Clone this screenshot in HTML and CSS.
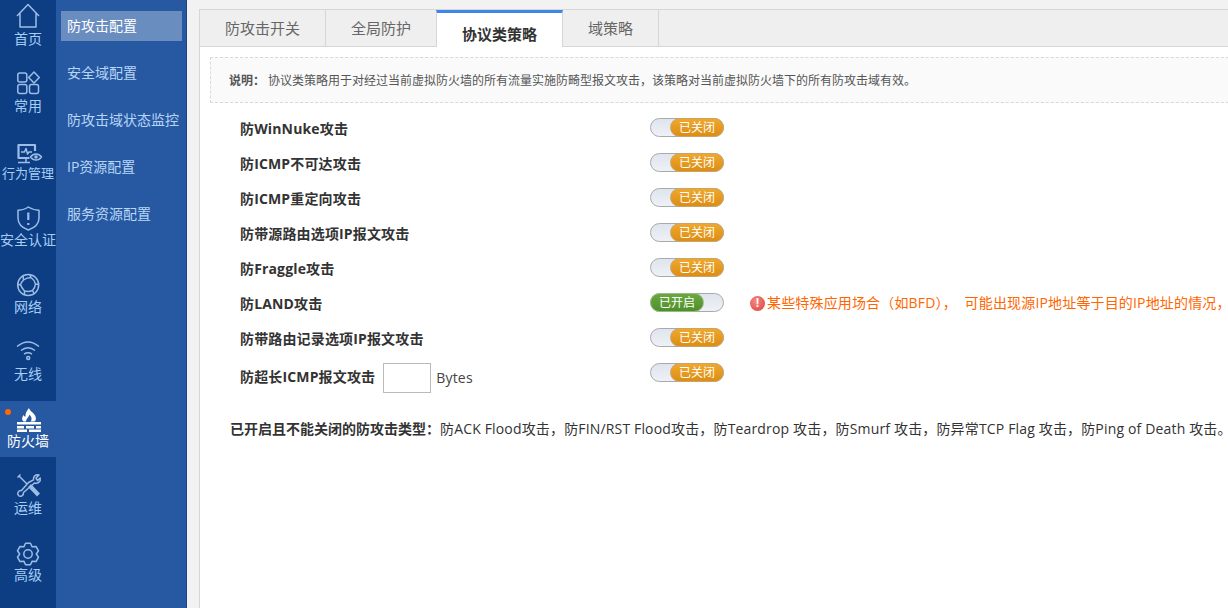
FILE: index.html
```html
<!DOCTYPE html>
<html lang="zh-CN">
<head>
<meta charset="utf-8">
<title>防攻击配置</title>
<link rel="stylesheet" href="styles.css">
</head>
<body>
<div class="app">
  <nav class="rail">
    <a class="rail-item">
      <svg class="rail-icon" viewBox="0 0 28 28"><path d="M3 14 14 2.500 25 14M6 11.500V25H22V11.500"/></svg>
      <span>首页</span>
    </a>
    <a class="rail-item">
      <svg class="rail-icon" viewBox="0 0 28 28"><rect x="3.800" y="4" width="9" height="9" rx="2"/><rect x="3.800" y="15.500" width="9" height="9" rx="2"/><rect x="15.500" y="15.500" width="9" height="9" rx="2"/><path d="M20 3 25.300 8.500 20 14 14.700 8.500Z"/></svg>
      <span>常用</span>
    </a>
    <a class="rail-item is-narrow">
      <svg class="rail-icon" viewBox="0 0 28 28"><path class="thick" d="M15.500 22H4.500V9H21V15"/><path d="M12 22V26M4 26.500H16M7 16H10.500L12 12.500 13.500 18 15 16H18"/><path d="M16.500 21C19.500 17 24.500 17 27.500 21 24.500 25 19.500 25 16.500 21Z"/><circle class="solid-soft" cx="22" cy="21" r="1.800"/></svg>
      <span>行为管理</span>
    </a>
    <a class="rail-item">
      <svg class="rail-icon" viewBox="0 0 28 28"><path d="M14.300 4C18 6.500 21 7 25 7.200V15C25 21 20 25 14.300 27 8.600 25 4 21 4 15V7.200C8 7 11 6.500 14.300 4Z"/><path class="thick" d="M14.300 9.500V17M14.300 20V22"/></svg>
      <span>安全认证</span>
    </a>
    <a class="rail-item">
      <svg class="rail-icon" viewBox="0 0 28 28"><circle cx="14.200" cy="15" r="10.500"/><path d="M9.500 10Q13 7.500 17 7.500 20.500 10 21.500 14 21 18 18.500 20.500 14.500 22 10.500 21 7.500 18 6.500 14.500 7.500 12 9.500 10ZM9.500 10 9 5.500M17 7.500 16 4.700M21.500 14 24.500 14.500M18.500 20.500 20 23.500M10.500 21 10.500 24.800M6.500 14.500 3.800 15"/></svg>
      <span>网络</span>
    </a>
    <a class="rail-item">
      <svg class="rail-icon" viewBox="0 0 28 28"><path d="M3 9.500Q14 .5 25 9.500M7 13.500Q14 8 21 13.500M10 17.200Q14 14.500 18 17.200"/><circle cx="14.200" cy="21" r="1.500"/></svg>
      <span>无线</span>
    </a>
    <a class="rail-item is-active">
      <svg class="rail-icon" viewBox="0 0 28 28"><path class="solid" d="M15 4C15.500 7 20 8.500 21.500 12.500 22.500 15 21.500 17 20.500 17.500H16.500C18.500 15.500 17.500 13 15.500 10.500 15 13 12.500 14 12 17.500H9.500C7.500 16 8 13 9.500 11 10 12 10.500 12.500 11.500 12.500 11 9.500 13 6.500 15 4Z"/><path class="solid" d="M3 18H27V20.500H3ZM3 22H10V24.500H3ZM12 22H20V24.500H12ZM22 22H27V24.500H22ZM3 25.500H13V28H3ZM15 25.500H27V28H15Z"/></svg>
      <span>防火墙</span>
      <i class="rail-dot"></i>
    </a>
    <a class="rail-item">
      <svg class="rail-icon" viewBox="0 0 28 28"><path d="M5 5 13 13M3.500 6.500 6.500 3.500"/><path class="thick-tool" d="M15.500 14.500 24.500 24"/><path d="M14.500 11.500 19.500 8.800C19 5.500 21.500 3.300 25 4L22 7 23.500 9.500 26.200 7C27 10.500 24 13 20.500 12L9.500 21.500C10 24.500 6.500 26.300 4.500 24.500 2.600 22.500 4.500 19 7.500 19.500Z"/></svg>
      <span>运维</span>
    </a>
    <a class="rail-item">
      <svg class="rail-icon" viewBox="0 0 28 28"><polygon points="11.530,5.280 16.470,5.280 18.150,8.810 22.040,8.500 24.520,12.780 22.300,16 24.520,19.220 22.040,23.500 18.150,23.190 16.470,26.720 11.530,26.720 9.850,23.190 5.960,23.500 3.480,19.220 5.700,16 3.480,12.780 5.960,8.500 9.850,8.810"/><circle cx="14" cy="16" r="4.200"/></svg>
      <span>高级</span>
    </a>
  </nav>

  <aside class="submenu">
    <a class="sub-item is-active">防攻击配置</a>
    <a class="sub-item">安全域配置</a>
    <a class="sub-item">防攻击域状态监控</a>
    <a class="sub-item">IP资源配置</a>
    <a class="sub-item">服务资源配置</a>
  </aside>

  <main class="main">
    <div class="panel">
      <div class="tabs">
        <a class="tab">防攻击开关</a>
        <a class="tab">全局防护</a>
        <a class="tab is-active">协议类策略</a>
        <a class="tab">域策略</a>
      </div>
      <div class="note"><b>说明：</b>协议类策略用于对经过当前虚拟防火墙的所有流量实施防畸型报文攻击，该策略对当前虚拟防火墙下的所有防攻击域有效。</div>

      <div class="rows">
        <div class="row"><span class="row-label">防WinNuke攻击</span><span class="switch"><span class="knob">已关闭</span></span></div>
        <div class="row"><span class="row-label">防ICMP不可达攻击</span><span class="switch"><span class="knob">已关闭</span></span></div>
        <div class="row"><span class="row-label">防ICMP重定向攻击</span><span class="switch"><span class="knob">已关闭</span></span></div>
        <div class="row"><span class="row-label">防带源路由选项IP报文攻击</span><span class="switch"><span class="knob">已关闭</span></span></div>
        <div class="row"><span class="row-label">防Fraggle攻击</span><span class="switch"><span class="knob">已关闭</span></span></div>
        <div class="row">
          <span class="row-label">防LAND攻击</span>
          <span class="switch is-on"><span class="knob">已开启</span></span>
          <span class="warn"><i class="warn-icon">!</i>某些特殊应用场合（如BFD）， 可能出现源IP地址等于目的IP地址的情况，</span>
        </div>
        <div class="row"><span class="row-label">防带路由记录选项IP报文攻击</span><span class="switch"><span class="knob">已关闭</span></span></div>
        <div class="row row-input">
          <span class="row-label"><span class="row-text">防超长ICMP报文攻击</span><input class="bytes" type="text"><span class="unit">Bytes</span></span>
          <span class="switch"><span class="knob">已关闭</span></span>
        </div>
      </div>

      <p class="fixed-types"><b>已开启且不能关闭的防攻击类型：</b>防ACK Flood攻击，防FIN/RST Flood攻击，防Teardrop 攻击，防Smurf 攻击，防异常TCP Flag 攻击，防Ping of Death 攻击。</p>
    </div>
  </main>
</div>
</body>
</html>
```
FILE: styles.css
```css
* { box-sizing: border-box; }
html, body { margin: 0; height: 100%; overflow: hidden; }
body {
  font-family: "Open Sans", "Noto Sans CJK SC", "Liberation Sans", sans-serif;
  font-size: 14px;
  color: #333;
  background: #f2f2f2;
}
.app { display: flex; width: 1228px; height: 608px; overflow: hidden; }

/* icon rail */
.rail { flex: 0 0 56px; background: #0d3e83; }
.rail-item {
  position: relative;
  display: flex;
  flex-direction: column;
  align-items: center;
  height: 56px;
  margin-bottom: 11px;
  padding-top: 3px;
  color: #a5cdf6;
  font-size: 14px;
  line-height: 18px;
  white-space: nowrap;
}
.rail-item:first-child { margin-top: -1px; }
.rail-item.is-narrow { font-size: 13px; }
.rail-icon {
  display: block;
  flex: none;
  width: 28px;
  height: 28px;
  overflow: visible;
  fill: none;
  stroke: #9dbde6;
  stroke-width: 1.5;
  stroke-linejoin: round;
}
.rail-icon .thick { stroke-width: 2.2; }
.rail-icon .thick-tool { stroke-width: 4; }
.rail-icon .solid { fill: #fff; stroke: none; }
.rail-icon .solid-soft { fill: #9dbde6; stroke: none; }
.rail-item.is-active { background: #2759a2; color: #fff; }
.rail-dot {
  position: absolute;
  left: 5px;
  top: 8px;
  width: 6px;
  height: 6px;
  border-radius: 50%;
  background: #ff6600;
}

/* second-level menu */
.submenu {
  flex: 0 0 131px;
  display: flex;
  flex-direction: column;
  gap: 17px;
  padding: 11px 4px 0 5px;
  background: #2759a2;
  border-right: 1px solid #1d4582;
}
.sub-item {
  height: 30px;
  padding-left: 6px;
  color: #b7d5f6;
  font-size: 14px;
  line-height: 30px;
  white-space: nowrap;
}
.sub-item.is-active { background: #6a8dc0; color: #fff; }

/* main */
.main { flex: 1; min-width: 0; padding: 9px 0 0 12px; }
.panel {
  width: 1100px;
  height: 620px;
  background: #fff;
  border: 1px solid #d6d6d6;
  border-right: 0;
}
.tabs { display: flex; height: 37px; background: #efefef; border-bottom: 1px solid #d6d6d6; }
.tab {
  height: 36px;
  padding: 0 25px;
  color: #666;
  font-size: 15px;
  line-height: 36px;
  border-right: 1px solid #d6d6d6;
  white-space: nowrap;
}
.tab.is-active {
  height: 37px;
  padding-top: 3px;
  background: #fff;
  color: #333;
  font-weight: 700;
  line-height: 37px;
  border-top: 3px solid #3c87e8;
  border-left: 1px solid #d6d6d6;
  margin-left: -1px;
}
.note {
  margin: 10px 0 0 10px;
  height: 46px;
  padding-left: 18px;
  background: #fafafa;
  border: 1px dashed #d9d9d9;
  border-right: 0;
  color: #555;
  font-size: 12px;
  line-height: 46px;
  white-space: nowrap;
}
.note b { margin-right: 3px; font-weight: 700; }

.rows { margin-top: 15px; padding-left: 40px; }
.row { display: flex; align-items: flex-start; height: 35px; }
.row-label {
  flex: 0 0 410px;
  display: flex;
  align-items: center;
  padding-top: 1px;
  font-weight: 700;
  letter-spacing: .15px;
  line-height: 20px;
  white-space: nowrap;
}
.row-input { height: 30px; }
.row-input .row-label { padding-top: 0; height: 30px; }
.row-text { margin-top: -2px; }
.bytes {
  width: 48px;
  height: 30px;
  margin: 0 5px 0 8px;
  padding: 0;
  background: #fff;
  border: 1px solid #bbb;
}
.unit { font-weight: 400; color: #444; letter-spacing: .2px; }

.switch {
  flex: none;
  display: flex;
  justify-content: flex-end;
  width: 74px;
  height: 19px;
  background: linear-gradient(#dfe5ee, #eef1f6);
  border: 1px solid #a9a9a9;
  border-radius: 10px;
}
.knob {
  width: 54px;
  height: 19px;
  margin: -1px;
  background: linear-gradient(#efa82c, #dd8d14);
  border: 1px solid #c9a468;
  border-radius: 10px;
  color: #fff;
  font-size: 12px;
  line-height: 17px;
  text-align: center;
}
.switch.is-on { justify-content: flex-start; }
.switch.is-on .knob { background: linear-gradient(#6aa83f, #4f8f2b); border-color: #95bd80; }

.warn {
  display: flex;
  align-items: center;
  margin-left: 26px;
  color: #ff6600;
  font-size: 14px;
  letter-spacing: .16px;
  word-spacing: 4px;
  line-height: 20px;
  white-space: nowrap;
}
.warn-icon {
  flex: none;
  width: 15px;
  height: 15px;
  margin-right: 2px;
  border-radius: 50%;
  background: radial-gradient(circle at 40% 35%, #f58a84, #dd3d38);
  color: #fff;
  font: 700 12px/15px "Liberation Sans", sans-serif;
  text-align: center;
}
.fixed-types {
  margin: 26px 0 0 30px;
  font-size: 14px;
  letter-spacing: .16px;
  line-height: 20px;
  white-space: nowrap;
}
.fixed-types b { font-weight: 700; letter-spacing: 0; }
```
